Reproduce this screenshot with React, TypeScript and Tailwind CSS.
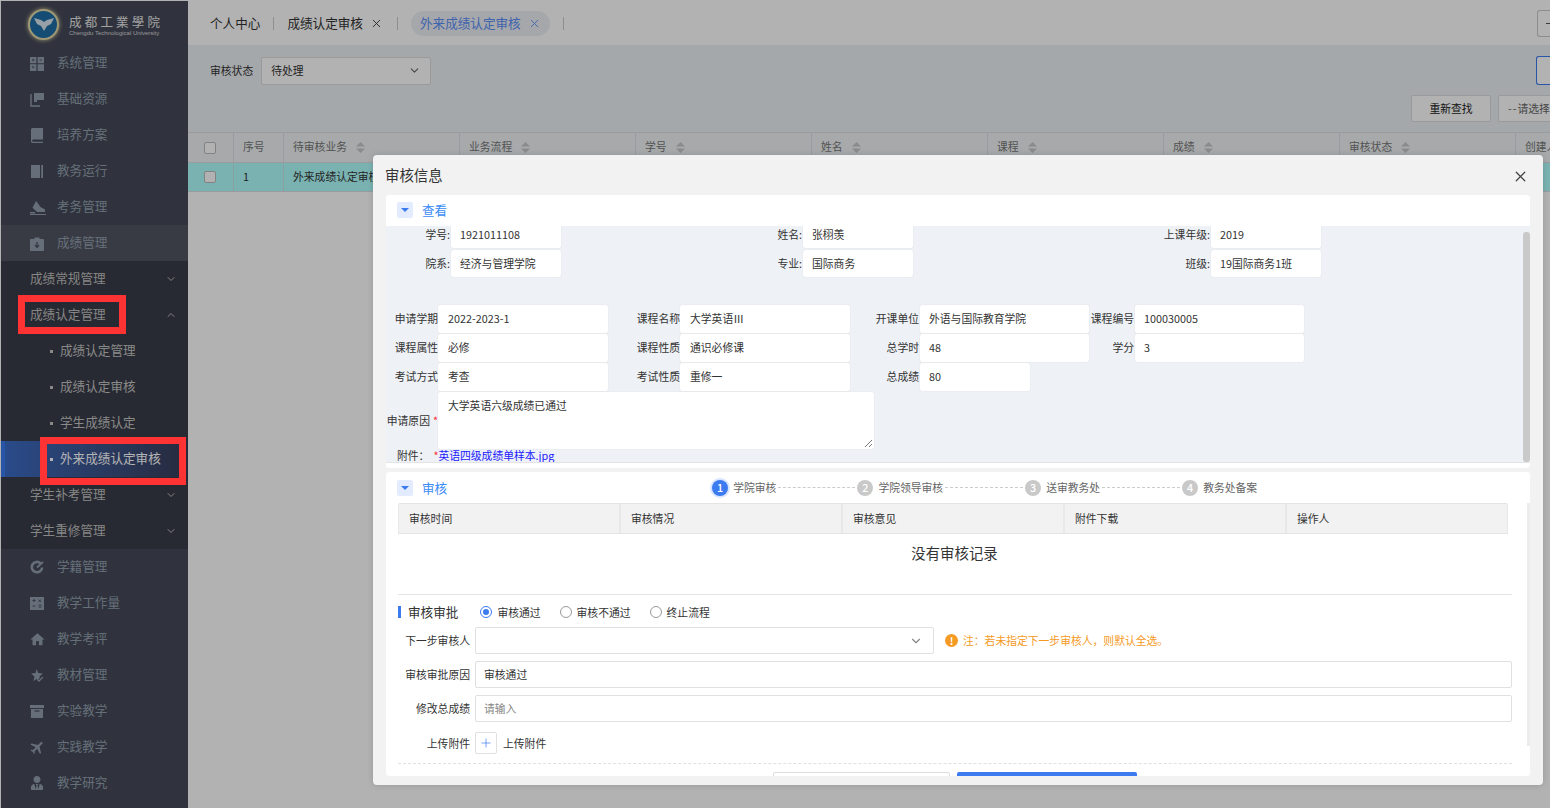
import { ChevronDown, ChevronUp, Plus, X } from "lucide-react";
import { FaUserTie } from "react-icons/fa";
import { MdFlight, MdHome } from "react-icons/md";

const font = "font-['Noto_Sans_CJK_SC','Microsoft_YaHei',sans-serif]";

function Calc() {
  return (
    <svg width="14" height="15" viewBox="0 0 14 15" fill="currentColor">
      <path d="M0 1h6.400v6.200H0zM7.600 1H14v6.200H7.600zM0 8.200h6.400V15H0zM7.600 8.200H14V15H7.600z" />
      <path d="M2 4h2.400M3.200 2.800v2.400M9.600 4H12M2.200 10.200l2 2M4.200 10.200l-2 2" stroke="#454958" strokeWidth="0.800" />
    </svg>
  );
}
function Flag() {
  return (
    <svg width="14" height="15" viewBox="0 0 14 15" fill="currentColor">
      <path d="M4 1h10v7H7v2H4z" />
      <path d="M1 2v12h9" fill="none" stroke="currentColor" strokeWidth="1.400" />
    </svg>
  );
}
function Book() {
  return (
    <svg width="14" height="15" viewBox="0 0 14 15" fill="currentColor">
      <path d="M2.500 0H13v11.500H3a1.200 1.200 0 0 0 0 2.300h10V15H2.500A1.500 1.500 0 0 1 1 13.500v-12A1.500 1.500 0 0 1 2.500 0z" />
    </svg>
  );
}
function Note() {
  return (
    <svg width="14" height="15" viewBox="0 0 14 15" fill="currentColor">
      <path d="M1 1h9v13H1zM11.200 1H13v13h-1.800z" />
    </svg>
  );
}
function Shoe() {
  return (
    <svg width="16" height="15" viewBox="0 0 16 15" fill="currentColor">
      <path d="M6 1l2 2.500L10.500 7 15 9.500V12H7L2.500 7.800z" />
      <path d="M0 12h5v1.500H0zM0 14h16v1H0z" />
    </svg>
  );
}
function Lock() {
  return (
    <svg width="14" height="15" viewBox="0 0 14 15" fill="currentColor">
      <path d="M4.500 3V1.500h5V3H13a1 1 0 0 1 1 1v10a1 1 0 0 1-1 1H1a1 1 0 0 1-1-1V4a1 1 0 0 1 1-1z" />
      <path d="M7 6v5M5 9l2 2.500L9 9" fill="none" stroke="#4f5361" strokeWidth="1.300" />
    </svg>
  );
}
function Target() {
  return (
    <svg width="14" height="15" viewBox="0 0 14 15" fill="none" stroke="currentColor">
      <path d="M10.500 3.200A5.200 5.200 0 1 0 12.200 7.500" strokeWidth="2.600" />
      <path d="M7 7.500L13 2" strokeWidth="1.800" />
    </svg>
  );
}
function Sheet() {
  return (
    <svg width="14" height="15" viewBox="0 0 14 15" fill="currentColor">
      <path d="M0 1h14v13H0z" />
      <path d="M2.500 4.500h3M2.500 10h3M8.500 3.500l2.500 2.500M11 3.500L8.500 6M8.500 9h3M8.500 11h3M4 3v3" stroke="#454958" strokeWidth="0.900" />
    </svg>
  );
}
function StarCheck() {
  return (
    <svg width="14" height="15" viewBox="0 0 14 15" fill="currentColor">
      <path d="M6.500 1l1.800 4 4.500.5-3.300 3 .3 1.500-2.300 2-1-1-3 2 1-4.500-3.400-3 4.600-.5z" />
      <path d="M7.500 11.500l1.500 1.500 4-4" fill="none" stroke="currentColor" strokeWidth="1.300" />
    </svg>
  );
}
function Archive() {
  return (
    <svg width="14" height="15" viewBox="0 0 14 15" fill="currentColor">
      <path d="M0 1h14v3H0zM1 5h12v9H1z" />
      <path d="M4.500 7h5" stroke="#454958" strokeWidth="1.200" />
    </svg>
  );
}

const topMenu = [
  { name: "系统管理", icon: <Calc /> },
  { name: "基础资源", icon: <Flag /> },
  { name: "培养方案", icon: <Book /> },
  { name: "教务运行", icon: <Note /> },
  { name: "考务管理", icon: <Shoe /> },
];
const bottomMenu = [
  { name: "学籍管理", icon: <Target /> },
  { name: "教学工作量", icon: <Sheet /> },
  { name: "教学考评", icon: <MdHome size={17} className="-ml-px" /> },
  { name: "教材管理", icon: <StarCheck /> },
  { name: "实验教学", icon: <Archive /> },
  { name: "实践教学", icon: <MdFlight size={17} className="-ml-px rotate-45" /> },
  { name: "教学研究", icon: <FaUserTie size={14} /> },
];

function MenuItem({ name, icon, active }: { name: string; icon: React.ReactNode; active?: boolean }) {
  return (
    <div className={`flex h-9 items-center pl-[29px] text-[#92a0ae] ${active ? "bg-[#525562]" : ""}`}>
      <span className="flex w-[27px] shrink-0 items-center">{icon}</span>
      <span className="pb-px text-[12.6px]">{name}</span>
    </div>
  );
}

function SubGroup({ name, open }: { name: string; open?: boolean }) {
  return (
    <div className="flex h-9 items-center justify-between pl-[29px] pr-[11px] text-[12.6px] text-[#c0c0bd]">
      <span className="pb-px">{name}</span>
      {open ? <ChevronUp size={12} /> : <ChevronDown size={12} />}
    </div>
  );
}

function SubItem({ name, active }: { name: string; active?: boolean }) {
  return (
    <div
      className={`flex h-9 items-center text-[12.6px] ${
        active
          ? "border-l-4 border-[#3c7af0] bg-gradient-to-r from-[#3c6cc6] to-[#383d58] pl-[45px] text-white"
          : "pl-[49px] text-[#c5c5c2]"
      }`}
    >
      <span className={`mr-[7px] size-[3px] ${active ? "bg-white" : "bg-[#c5c5c2]"}`} />
      <span className="pb-px">{name}</span>
    </div>
  );
}

function Sidebar() {
  return (
    <aside className="w-[187px] shrink-0 bg-[#454958]">
      <div className="flex h-[44px] items-center pl-[27px]">
        <div className="mt-[2px] flex size-[31px] items-center justify-center rounded-full border-2 border-[#e3d9a8] bg-[#1d6da6] shadow-[0_0_4px_#e3d9a8]">
          <svg width="20" height="16" viewBox="0 0 20 16">
            <path d="M0 2l7 2 3 2 3-2 7-2-3 6-4 2-3 5-3-5-4-2z" fill="#d7e6ee" />
          </svg>
        </div>
        <div className="ml-[10px] flex flex-col pt-[5px]">
          <span className="whitespace-nowrap text-[12.5px] leading-[14px] tracking-[3.200px] text-[#e6e6e6]">成都工業學院</span>
          <span className="whitespace-nowrap font-['Liberation_Sans',sans-serif] text-[6px] leading-[8px] text-[#d8d8d8]">Chengdu Technological University</span>
        </div>
      </div>
      {topMenu.map((m) => (
        <MenuItem key={m.name} name={m.name} icon={m.icon} />
      ))}
      <MenuItem name="成绩管理" icon={<Lock />} active />
      <div className="bg-[#383b49]">
        <SubGroup name="成绩常规管理" />
        <SubGroup name="成绩认定管理" open />
        <SubItem name="成绩认定管理" />
        <SubItem name="成绩认定审核" />
        <SubItem name="学生成绩认定" />
        <SubItem name="外来成绩认定审核" active />
        <SubGroup name="学生补考管理" />
        <SubGroup name="学生重修管理" />
      </div>
      {bottomMenu.map((m) => (
        <MenuItem key={m.name} name={m.name} icon={m.icon} />
      ))}
    </aside>
  );
}

function Sort() {
  return (
    <svg width="9" height="11" viewBox="0 0 9 11" fill="#c4c8cb" className="ml-[9px] mt-[2px]">
      <path d="M4.500 0L9 4.500H0zM4.500 11L0 6.500h9z" />
    </svg>
  );
}

const columns = ["待审核业务", "业务流程", "学号", "姓名", "课程", "成绩", "审核状态"];

function Background() {
  return (
    <main className="min-w-0 flex-1 overflow-hidden">
      <div className="flex h-[44px] items-center bg-white pl-[22px] text-[12.6px] text-[#333]">
        <span>个人中心</span>
        <span className="mx-[13px] h-[13px] w-px bg-[#ccc]" />
        <span>成绩认定审核</span>
        <X size={13} strokeWidth={1.600} className="ml-[7px] text-[#333]" />
        <span className="ml-[14px] h-[13px] w-px bg-[#ccc]" />
        <span className="ml-[13px] flex h-[25px] w-[139px] items-center rounded-full bg-[#edf0f4] pl-[9px] text-[#5b8ff9]">
          外来成绩认定审核
          <X size={13} strokeWidth={1.600} className="ml-[7px]" />
        </span>
        <span className="ml-[13px] h-[13px] w-px bg-[#ccc]" />
        <span className="ml-auto flex h-[27px] w-[13px] items-center rounded-l-[3px] border border-r-0 border-[#ccc] pl-[8px]">
          <span className="h-px w-[4px] bg-[#555]" />
        </span>
      </div>
      <div className="bg-[#edf1f5]">
        <div className="flex h-[87px] flex-col pt-[11px]">
          <div className="flex items-center">
            <span className="ml-[22px] text-[10.8px] text-[#333]">审核状态</span>
            <div className="ml-[8px] flex h-[28px] w-[170px] items-center justify-between rounded-[2px] border border-[#ddd] bg-white pl-[9px] pr-[9px] text-[10.8px] text-[#333]">
              <span className="pb-px">待处理</span>
              <ChevronDown size={13} className="text-[#666]" />
            </div>
            <div className="ml-auto h-[29px] w-[14px] rounded-l-[3px] border border-r-0 border-[#3c7af0] bg-white" />
          </div>
          <div className="mt-[10px] flex">
            <div className="ml-auto flex h-[27px] w-[80px] items-center justify-center rounded-[2px] border border-[#ddd] bg-white text-[10.8px] text-[#222]">
              重新查找
            </div>
            <div className="ml-[7px] flex h-[27px] w-[52px] items-center overflow-hidden rounded-l-[2px] border border-r-0 border-[#ddd] bg-white pl-[9px] text-[10.8px] whitespace-nowrap text-[#666]">
              <span className="tracking-[1px]">--</span>请选择
            </div>
          </div>
        </div>
      </div>
      <div className="h-full bg-white text-[10.8px]">
        <div className="flex h-[31px] w-[1500px] items-center border-y border-[#dcdfe3] bg-[#f0f3f5] text-[#777]">
          <div className="flex h-full w-[46px] items-center justify-center border-r border-[#dcdfe3] pr-px">
            <span className="size-[12px] rounded-[2px] border border-[#bbb] bg-white" />
          </div>
          <div className="flex h-full w-[50px] items-center border-r border-[#dcdfe3] pb-[2px] pl-[9px]">序号</div>
          {columns.map((c) => (
            <div key={c} className="flex h-full w-[176px] items-center border-r border-[#dcdfe3] pb-[2px] pl-[9px]">
              {c}
              <Sort />
            </div>
          ))}
          <div className="flex h-full items-center pb-[2px] pl-[9px]">创建人</div>
        </div>
        <div className="flex h-[29px] w-[1500px] items-center border-b border-[#dcdfe3] bg-[#afffff] text-[#333]">
          <div className="flex h-full w-[46px] items-center justify-center border-r border-[#c8e6e6] pr-px">
            <span className="size-[12px] rounded-[2px] border border-[#bbb] bg-white" />
          </div>
          <div className="flex h-full w-[50px] items-center border-r border-[#c8e6e6] pb-[2px] pl-[9px]">1</div>
          <div className="flex h-full flex-1 items-center pb-[2px] pl-[9px]">外来成绩认定审核</div>
          <div className="flex h-full w-[80px] items-center pb-[2px] pl-[10px]">张栩羡</div>
        </div>
      </div>
    </main>
  );
}

function Collapse({ title, nudge }: { title: string; nudge?: boolean }) {
  return (
    <div className={`-ml-px flex items-center ${nudge ? "mt-[2px]" : ""}`}>
      <span className="flex size-[16px] items-center justify-center rounded-[2px] bg-[#e3ecff]">
        <span className="border-x-[4px] border-t-[4px] border-x-transparent border-t-[#3c7af0]" />
      </span>
      <span className="ml-[9px] text-[12.6px] text-[#3c8cf5]">{title}</span>
    </div>
  );
}

function Field({
  label,
  value,
  lw,
  w,
  h = "h-[27px]",
  pad = "pl-[10px]",
}: {
  label: string;
  value: string;
  lw: string;
  w: string;
  h?: string;
  pad?: string;
}) {
  return (
    <>
      <span className={`flex shrink-0 justify-end whitespace-nowrap pb-px text-[10.8px] text-[#333] ${lw}`}>{label}</span>
      <span className={`flex shrink-0 items-center rounded-[2px] bg-white pb-px text-[10.8px] text-[#333] shadow-[0_0_1px_#ccc] ${pad} ${w} ${h}`}>
        {value}
      </span>
    </>
  );
}

function InfoCard() {
  return (
    <section className="h-[273px] w-[1144px] rounded-[3px] bg-white">
      <div className="flex h-[31px] items-center pl-[12px]">
        <Collapse title="查看" />
      </div>
      <div className="relative h-[237px] overflow-hidden border-b border-[#e4e4e4] bg-[#eef1f5]">
        <div className="-mt-[5px] flex flex-col">
          <div className="flex items-center">
            <Field label="学号:" value="1921011108" lw="w-[64px]" w="w-[110px] ml-px" pad="pl-[9px]" />
            <Field label="姓名:" value="张栩羡" lw="w-[241px]" w="w-[110px] ml-px" pad="pl-[9px]" />
            <Field label="上课年级:" value="2019" lw="w-[297px]" w="w-[110px] ml-px" pad="pl-[9px]" />
          </div>
          <div className="mt-[2px] flex items-center">
            <Field label="院系:" value="经济与管理学院" lw="w-[64px]" w="w-[110px] ml-px" pad="pl-[9px]" />
            <Field label="专业:" value="国际商务" lw="w-[241px]" w="w-[110px] ml-px" pad="pl-[9px]" />
            <Field label="班级:" value="19国际商务1班" lw="w-[297px]" w="w-[110px] ml-px" pad="pl-[9px]" />
          </div>
          <div className="mt-[28px] flex items-center">
            <Field label="申请学期" value="2022-2023-1" lw="w-[52px]" w="w-[170px]" h="h-[28px]" />
            <Field label="课程名称" value="大学英语Ⅲ" lw="w-[72px]" w="w-[170px]" h="h-[28px]" />
            <Field label="开课单位" value="外语与国际教育学院" lw="w-[69px]" w="w-[169px] ml-px" h="h-[28px]" pad="pl-[9px]" />
            <Field label="课程编号" value="100030005" lw="w-[45px]" w="w-[169px] ml-px" h="h-[28px]" pad="pl-[9px]" />
          </div>
          <div className="mt-px flex items-center">
            <Field label="课程属性" value="必修" lw="w-[52px]" w="w-[170px]" h="h-[28px]" />
            <Field label="课程性质" value="通识必修课" lw="w-[72px]" w="w-[170px]" h="h-[28px]" />
            <Field label="总学时" value="48" lw="w-[69px]" w="w-[169px] ml-px" h="h-[28px]" pad="pl-[9px]" />
            <Field label="学分" value="3" lw="w-[45px]" w="w-[169px] ml-px" h="h-[28px]" pad="pl-[9px]" />
          </div>
          <div className="mt-px flex items-center">
            <Field label="考试方式" value="考查" lw="w-[52px]" w="w-[170px]" h="h-[28px]" />
            <Field label="考试性质" value="重修一" lw="w-[72px]" w="w-[170px]" h="h-[28px]" />
            <Field label="总成绩" value="80" lw="w-[69px]" w="w-[110px] ml-px" h="h-[28px]" pad="pl-[9px]" />
          </div>
          <div className="mt-px flex items-center">
            <span className="flex w-[52px] justify-end text-[10.8px] whitespace-nowrap text-[#333]">
              申请原因<span className="ml-[3px] text-red-500">*</span>
            </span>
            <div className="relative h-[57px] w-[436px] rounded-[2px] bg-white pl-[10px] pt-[5px] text-[10.8px] text-[#333] shadow-[0_0_1px_#ccc]">
              大学英语六级成绩已通过
              <svg width="9" height="9" viewBox="0 0 9 9" className="absolute bottom-px right-px" stroke="#555" strokeWidth="0.800">
                <path d="M1 8l7-7M5 8l3-3" />
              </svg>
            </div>
          </div>
          <div className="ml-[11px] flex h-[13px] items-center text-[10.8px] leading-[13px] text-[#333]">
            附件：
            <span className="ml-[4px] text-red-500">*</span>
            <span className="text-[#1a1aff]">英语四级成绩单样本.jpg</span>
          </div>
        </div>
        <div className="absolute bottom-0 right-0 top-[6px] w-[7px] rounded-[3px] bg-[#c9c9c9]" />
      </div>
    </section>
  );
}

function Step({ n, label, active, line }: { n: number; label: string; active?: boolean; line: string }) {
  return (
    <div className="flex items-center">
      <span
        className={`flex size-[16px] items-center justify-center rounded-full text-[10.8px] font-medium text-white ${
          active ? "bg-[#3c7af0] shadow-[0_0_0_2px_#d9e6ff]" : "bg-[#c9c9c9]"
        }`}
      >
        {n}
      </span>
      <span className="ml-[5px] text-[10.8px] text-[#666]">{label}</span>
      {line && <span className={`mx-[2px] border-t border-dashed border-[#ccc] ${line}`} />}
    </div>
  );
}

function Radio({ label, checked }: { label: string; checked?: boolean }) {
  return (
    <span className="flex items-center text-[10.8px] text-[#333]">
      <span className={`flex size-[12px] items-center justify-center rounded-full border ${checked ? "border-[#3c7af0]" : "border-[#999]"}`}>
        {checked && <span className="size-[6px] rounded-full bg-[#3c7af0]" />}
      </span>
      <span className="ml-[5px]">{label}</span>
    </span>
  );
}

function FormLabel({ children }: { children: React.ReactNode }) {
  return <span className="flex w-[72px] shrink-0 justify-end whitespace-nowrap text-[10.8px] text-[#333]">{children}</span>;
}

function AuditCard() {
  return (
    <section className="relative mt-[4px] h-[304px] w-[1144px] overflow-hidden rounded-[3px] bg-white">
      <div className="flex h-[31px] items-center pl-[12px]">
        <Collapse title="审核" nudge />
        <div className="ml-[265px] flex items-center">
          <Step n={1} label="学院审核" active line="w-[77px]" />
          <Step n={2} label="学院领导审核" line="w-[78px]" />
          <Step n={3} label="送审教务处" line="w-[78px]" />
          <Step n={4} label="教务处备案" line="" />
        </div>
      </div>
      <div className="ml-[12px] w-[1110px]">
        <div className="grid h-[31px] grid-cols-5 rounded-t-[2px] border-y border-[#e4e4e4] bg-[#f2f2f2] text-[10.8px] text-[#333]">
          {["审核时间", "审核情况", "审核意见", "附件下载", "操作人"].map((t) => (
            <div key={t} className="flex items-center border-x border-[#e8e8e8] pl-[10px]">
              {t}
            </div>
          ))}
        </div>
        <div className="flex h-[38px] items-center justify-center pl-[3px] text-[14.4px] text-[#333]">没有审核记录</div>
      </div>
      <div className="ml-[12px] mt-[22px] w-[1114px] border-t border-[#e4e4e4] pt-[11px]">
        <div className="flex h-[12px] items-center">
          <span className="h-[12px] w-[3px] bg-[#3c7af0]" />
          <span className="ml-[7px] text-[12.6px] text-[#333]">审核审批</span>
          <div className="ml-[22px] flex gap-[19px]">
            <Radio label="审核通过" checked />
            <Radio label="审核不通过" />
            <Radio label="终止流程" />
          </div>
        </div>
        <div className="mt-[9px] flex items-center">
          <FormLabel>下一步审核人</FormLabel>
          <div className="ml-[5px] flex h-[27px] w-[459px] items-center justify-end rounded-[2px] border border-[#e0e0e0] pr-[10px]">
            <ChevronDown size={14} className="text-[#888]" />
          </div>
          <span className="ml-[11px] flex size-[13px] items-center justify-center rounded-full bg-[#f59a23] text-[10px] font-bold text-white">!</span>
          <span className="ml-[5px] text-[10.8px] text-[#f59a23]">注：若未指定下一步审核人，则默认全选。</span>
        </div>
        <div className="mt-[7px] flex items-center">
          <FormLabel>审核审批原因</FormLabel>
          <div className="ml-[5px] flex h-[27px] flex-1 items-center rounded-[2px] border border-[#e0e0e0] pl-[8px] text-[10.8px] text-[#333]">审核通过</div>
        </div>
        <div className="mt-[7px] flex items-center">
          <FormLabel>修改总成绩</FormLabel>
          <div className="ml-[5px] flex h-[27px] flex-1 items-center rounded-[2px] border border-[#e0e0e0] pl-[8px] text-[10.8px] text-[#888]">请输入</div>
        </div>
        <div className="mt-[10px] flex items-center">
          <FormLabel>上传附件</FormLabel>
          <span className="ml-[5px] flex size-[22px] items-center justify-center rounded-[2px] border border-[#e0e0e0] text-[#3c7af0]">
            <Plus size={14} strokeWidth={1.200} />
          </span>
          <span className="ml-[6px] text-[10.8px] text-[#333]">上传附件</span>
        </div>
        <div className="mt-[9px] border-t border-dashed border-[#e0e0e0]" />
        <div className="ml-[375px] mt-[8px] flex gap-[7px]">
          <span className="h-[10px] w-[177px] rounded-t-[2px] border border-[#ddd]" />
          <span className="h-[10px] w-[180px] rounded-t-[2px] bg-[#3c7af0]" />
        </div>
      </div>
      <div className="absolute bottom-[30px] right-0 top-[31px] w-[3px] bg-[#ececec]" />
    </section>
  );
}

function Modal() {
  return (
    <div className="absolute left-[373px] top-[155px] h-[630px] w-[1170px] rounded-[4px] bg-[#f2f2f2] shadow-[0_0_6px_rgba(0,0,0,0.15)]">
      <div className="flex h-[40px] items-center justify-between pl-[12px] pr-[14px]">
        <span className="pb-px text-[14.4px] text-[#333]">审核信息</span>
        <X size={17} strokeWidth={1.800} className="mt-[2px] text-[#444]" />
      </div>
      <div className="ml-[13px]">
        <InfoCard />
        <AuditCard />
      </div>
    </div>
  );
}

export default function App() {
  return (
    <div className={`relative flex h-[808px] w-[1550px] overflow-hidden bg-white pl-px pt-px ${font}`}>
      <Sidebar />
      <Background />
      <div className="absolute inset-0 bg-black/30" />
      <Modal />
      {/* red annotation boxes */}
      <div className="absolute left-[18px] top-[295px] h-[39px] w-[108px] border-[7px] border-[#ff3333]" />
      <div className="absolute left-[40px] top-[437px] h-[48px] w-[146px] border-[7px] border-[#ff3333]" />
    </div>
  );
}
